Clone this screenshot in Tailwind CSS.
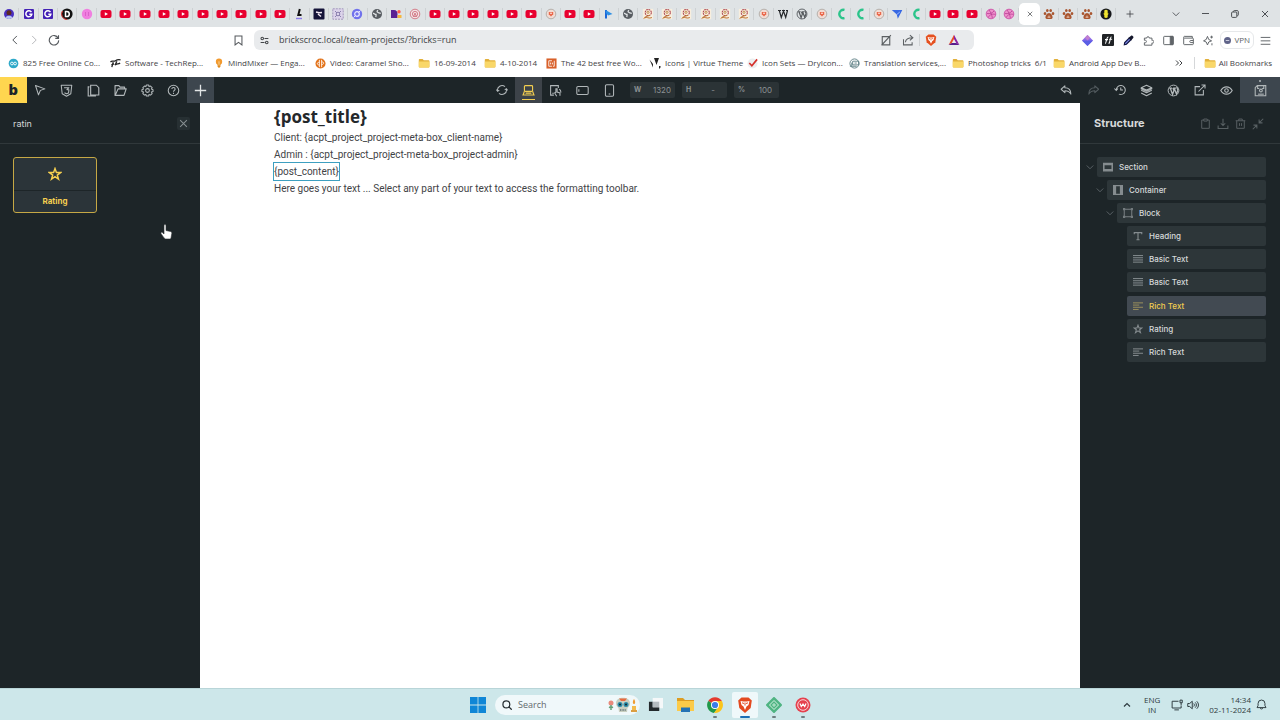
<!DOCTYPE html>
<html lang="en">
<head>
<meta charset="utf-8">
<title>Bricks builder</title>
<script src="https://cdn.jsdelivr.net/npm/@tailwindcss/browser@4"></script>
</head>
<body class="flex h-screen min-w-[1100px] flex-col overflow-hidden bg-white font-['Open_Sans','Noto_Sans',sans-serif] text-[9px] text-[#45484b]">

<svg class="hidden" aria-hidden="true">
  <defs>
    <symbol id="yt" viewBox="0 0 12 12"><rect x="0.5" y="2" width="11" height="8" rx="2" fill="#e8002f"/><path d="M4.8 4.2v3.6L8 6z" fill="#fff"/></symbol>
    <symbol id="person" viewBox="0 0 12 12"><circle cx="6" cy="6" r="5" fill="#4a2fc0"/><circle cx="6" cy="4.8" r="2.5" fill="#5b2a22"/><path d="M2.5 9.5c1-2.5 6-2.5 7 0a5 5 0 0 1-7 0z" fill="#b9c6f2"/></symbol>
    <symbol id="g" viewBox="0 0 12 12"><rect x="1" y="1" width="10" height="10" rx="1" fill="#4321b5"/><path d="M8.4 4.2A3 3 0 1 0 8.8 6.3H6.3" fill="none" stroke="#fff" stroke-width="1.5"/></symbol>
    <symbol id="dred" viewBox="0 0 12 12"><circle cx="6" cy="6" r="5.6" fill="#111"/><path d="M1.5 3A5.6 5.6 0 0 0 6 11.6" fill="none" stroke="#e3342f"/><path d="M4.5 3.4v5.2h1.2a2.6 2.6 0 0 0 0-5.2z" fill="none" stroke="#fff" stroke-width="1.5"/></symbol>
    <symbol id="pink" viewBox="0 0 12 12"><circle cx="6" cy="6" r="5.2" fill="#f07fe0"/><path d="M4.5 4v4M7.5 4v4" stroke="#d964c8"/></symbol>
    <symbol id="lmark" viewBox="0 0 12 12"><path d="M6.800 1 5.300 7h3.200" fill="none" stroke="#111" stroke-width="2"/><path d="M3 10.500h6" stroke="#8a7be8" stroke-width="1.400"/></symbol>
    <symbol id="navy" viewBox="0 0 12 12"><rect x=".5" y=".5" width="11" height="11" rx="1" fill="#141338"/><path d="M3 4l3 .8 3-.3M5 6l3 2.500" stroke="#f3e9f4" stroke-width="1.500" fill="none"/></symbol>
    <symbol id="lav" viewBox="0 0 12 12"><rect x=".8" y=".8" width="10.400" height="10.400" fill="#dcd3ea" stroke="#a397bd" stroke-dasharray="2 1"/><path d="M3 3l2 2M9 3L7 5M3 9l2-2M9 9L7 7" stroke="#8a7fae"/><circle cx="6" cy="6" r="1.800" fill="none" stroke="#8a7fae"/></symbol>
    <symbol id="ring" viewBox="0 0 12 12"><circle cx="6" cy="6" r="5.200" fill="#7172ec"/><circle cx="6" cy="6" r="2.300" fill="none" stroke="#e8e8ff" stroke-width="1.200"/><path d="m7.500 4.500 2-2M4.500 7.500l-2 2" stroke="#e8e8ff"/></symbol>
    <symbol id="globe" viewBox="0 0 12 12"><circle cx="6" cy="6" r="5" fill="#585d62"/><path d="M2 5.500c1.500-.3 1.500 1 3 1 0 1 .2 1.500-.3 2.500M7 2.200C5.500 3.200 6 4 7.200 4.500S9 5.500 9.800 5" stroke="#e3e6e8" stroke-width="1.300" fill="none"/></symbol>
    <symbol id="dots" viewBox="0 0 12 12"><path d="M1 2h3a3.800 3.800 0 0 1 3.500 4v4H1z" fill="#5b2293"/><circle cx="9" cy="3.800" r="1.700" fill="#ff5b4d"/><rect x="7.500" y="7" width="4" height="3" fill="#f6b73c"/></symbol>
    <symbol id="rose" viewBox="0 0 12 12"><circle cx="6" cy="6" r="4.800" fill="#f3e0e2" stroke="#cf7380" stroke-width=".9"/><circle cx="6" cy="6" r="2.600" fill="none" stroke="#cf7380" stroke-width=".9"/><path d="M4.500 9 6 5l1.500 4" stroke="#cf7380" stroke-width=".9" fill="none"/></symbol>
    <symbol id="badge" viewBox="0 0 12 12"><circle cx="6" cy="6" r="4.800" fill="#f2dcd4" stroke="#b5b0ab"/><path d="M3.800 4h4.400v2.300L6 8.500 3.800 6.300z" fill="#e9684b"/><circle cx="6" cy="5.300" r=".8" fill="#fff"/></symbol>
    <symbol id="play" viewBox="0 0 12 12"><path d="M3 10.500V2" fill="none" stroke="#1c68d8" stroke-width="2"/><path d="M2.500 2 9.500 6 5 7.500 3 5z" fill="#2d8fe4"/></symbol>
    <symbol id="swirl" viewBox="0 0 14 14"><rect x="1" y="1" width="12" height="12" fill="#f8eede"/><circle cx="7.300" cy="5.300" r="3.600" fill="none" stroke="#a93c47" stroke-width="1.200" stroke-dasharray="2 .8"/><circle cx="7" cy="5" r="1.300" fill="none" stroke="#b9803c"/><path d="M9.500 8.500C7 9 4 10 3 11.500c3-1.500 5 1 8.500-.3" fill="none" stroke="#bd793c" stroke-width="1.200"/></symbol>
    <symbol id="w" viewBox="0 0 12 12"><path d="M1 2.500h3M5 2.500h3M9 2.500h2M2.300 2.500l2 7L6.500 3l2.200 6.500 1.800-7" fill="none" stroke="#26292c" stroke-width="1.200"/></symbol>
    <symbol id="wp" viewBox="0 0 16 16"><circle cx="8" cy="8" r="6.600" fill="none" stroke="currentColor" stroke-width="1.200"/><path d="M2.700 5h3.500M7.500 5H11M4 5l2.800 8L8.500 8 7.300 5M8.800 5l2.900 7.500L13.200 8c.5-2-1.500-2.500-1-4.500" fill="none" stroke="currentColor" stroke-width="1.600"/></symbol>
    <symbol id="crescent" viewBox="0 0 12 12"><path d="M9.500 1.800A4.300 4.300 0 1 0 9.500 10.200" fill="none" stroke="currentColor" stroke-width="2.400"/></symbol>
    <symbol id="kite" viewBox="0 0 12 12"><path d="M.8 2h10.500L6.800 10.800l-1-4.300z" fill="#3869e3"/><path d="m5.800 6.500 3-2.500" stroke="#b8cdfb" stroke-width=".8"/></symbol>
    <symbol id="drib" viewBox="0 0 12 12"><circle cx="6" cy="6" r="4.800" fill="#ee8fca" stroke="#cf5aab"/><path d="M2 5.500c3 .5 5.500-.5 7-2.500M4 2c2 2.500 3 5 3.300 8M3.300 9.500C4.500 6.500 7.500 5.500 10.300 6.500" fill="none" stroke="#b93f95" stroke-width=".8"/></symbol>
    <symbol id="paw" viewBox="0 0 12 12" fill="#a9552f"><ellipse cx="2" cy="5.500" rx="1.300" ry="1.500"/><ellipse cx="4.300" cy="2.600" rx="1.300" ry="1.500"/><ellipse cx="7.700" cy="2.600" rx="1.300" ry="1.500"/><ellipse cx="10" cy="5.500" rx="1.300" ry="1.500"/><path d="M6 5c2 0 4 3 3.500 5-.3 1-1.500 1-3.500 1s-3.200 0-3.500-1C2 8 4 5 6 5z"/><path d="M4.500 9.200h3M6 7.500v2" stroke="#f2d5c6" stroke-width=".8"/></symbol>
    <symbol id="snap" viewBox="0 0 12 12"><circle cx="6" cy="6" r="5.600" fill="#15171a"/><path d="M4.300 2.500c.8-1 2.600-1 3.400 0v2.800l1 .5-1 1.200v2.200c-.8 1-2.600 1-3.400 0V7l-1-1.200 1-.5z" fill="#efe22e"/></symbol>

    <symbol id="folder" viewBox="0 0 12 12"><path d="M.8 2.800c0-.5.3-.8.8-.8h3l1.200 1.300h4.800c.5 0 .8.300.8.800V9.800c0 .5-.3.8-.8.8H1.600c-.5 0-.8-.3-.8-.8z" fill="#e2b03a"/><path d="M.8 4.600h10.600v5.200c0 .5-.3.800-.8.800H1.600c-.5 0-.8-.3-.8-.8z" fill="#f9d768"/></symbol>

    <symbol id="chev-l" viewBox="0 0 16 16"><path d="M11 1.500 4.500 8l6.500 6.500" fill="none" stroke="currentColor" stroke-width="1.600"/></symbol>
    <symbol id="chev-d" viewBox="0 0 16 16"><path d="m1.500 5 6.500 6.500L14.500 5" fill="none" stroke="currentColor" stroke-width="1.600"/></symbol>
    <symbol id="x" viewBox="0 0 16 16"><path d="m2 2 12 12M14 2 2 14" stroke="currentColor" stroke-width="1.800"/></symbol>
    <symbol id="plus" viewBox="0 0 16 16"><path d="M8 1v14M1 8h14" stroke="currentColor" stroke-width="1.600"/></symbol>
    <symbol id="star" viewBox="0 0 16 16"><path d="m8 1.800 1.600 4.500h4.800l-3.800 2.900 1.400 4.700L8 11.100l-4 2.800 1.400-4.700L1.600 6.300h4.800z" fill="none" stroke="currentColor" stroke-width="1.700"/></symbol>
    <symbol id="richtext" viewBox="0 0 16 16"><path d="M0 3h16M0 6.500h10M0 10h16M0 13.500h9" stroke="currentColor" stroke-width="1.600"/></symbol>
    <symbol id="basictext" viewBox="0 0 16 16"><path d="M0 2.500h16M0 6h16M0 9.500h16M0 13h16" stroke="currentColor" stroke-width="1.600"/></symbol>
  </defs>
</svg>

<!-- Browser tabs -->
<div class="flex h-[27px] shrink-0 items-center bg-[#dfe3e5] text-[#3b3e42]">
  <div id="tabs-a" class="flex flex-[851]"></div>
  <div id="tabs-b" class="flex flex-[168]"></div>
  <button aria-label="Close tab" class="flex h-[22px] w-[21px] items-center justify-center rounded-[5px] bg-white"><svg class="size-[6px]"><use href="#x"/></svg></button>
  <div id="tabs-c" class="flex flex-[76]"></div>
  <div class="flex w-[164px] items-center justify-between pr-[11px] pl-[10px]">
    <button aria-label="New tab"><svg class="size-[8px]"><use href="#plus"/></svg></button>
    <div class="flex items-center gap-[22px]">
      <button aria-label="Search tabs"><svg class="size-[8px]"><use href="#chev-d"/></svg></button>
      <button aria-label="Minimize"><svg class="size-[7px]" viewBox="0 0 8 8"><path d="M0 4h8" stroke="currentColor"/></svg></button>
      <button aria-label="Restore"><svg class="size-[8px]" viewBox="0 0 8 8" fill="none" stroke="currentColor" stroke-width=".9"><rect x=".6" y="2" width="5.200" height="5.400" rx="1"/><path d="M2.400 1.800V1.500c0-.5.400-.9.900-.9h3c.6 0 1 .4 1 1v3.200c0 .6-.4 1-1 1"/></svg></button>
      <button aria-label="Close window"><svg class="size-[8px]"><use href="#x"/></svg></button>
    </div>
  </div>
</div>

<!-- Address bar -->
<div class="flex h-[26px] shrink-0 items-center">
  <div class="flex w-[254px] items-center justify-between px-[10px] text-[#55595d]">
    <div class="flex items-center gap-[9px]">
      <button aria-label="Back"><svg class="size-[10px]"><use href="#chev-l"/></svg></button>
      <button aria-label="Forward" class="rotate-180 text-[#b9bbbd]"><svg class="size-[10px]"><use href="#chev-l"/></svg></button>
      <button aria-label="Reload"><svg class="size-[12px]" viewBox="0 0 16 16" fill="none" stroke="currentColor" stroke-width="1.500"><path d="M13.500 5.300A6.300 6.300 0 1 0 14.300 8.500M14 1.500v4.300H9.700"/></svg></button>
    </div>
    <button aria-label="Bookmark"><svg class="size-[11px]" viewBox="0 0 16 16" fill="none" stroke="currentColor" stroke-width="1.500"><path d="M3 1.500h10v13L8 10.800 3 14.500z"/></svg></button>
  </div>
  <div class="flex h-5 flex-1 items-center rounded-[6px] bg-[#e9ebed] pr-[14px] pl-[6px]">
    <svg class="mr-[10px] size-[9px] shrink-0" viewBox="0 0 14 14" fill="none" stroke="#44474a" stroke-width="1.600"><circle cx="3.500" cy="4" r="2"/><path d="M7 4h6M1 10h6"/><circle cx="10.500" cy="10" r="2"/></svg>
    <input aria-label="Address" value="brickscroc.local/team-projects/?bricks=run" class="min-w-0 flex-1 bg-transparent text-[9px] text-[#3f4346] outline-none">
    <div class="flex items-center text-[#5c6063]">
      <svg class="mr-[10px] size-[12px]" viewBox="0 0 16 16" fill="none" stroke="currentColor" stroke-width="1.500"><path d="M3 3.500h10v11H3zM2 15 14.500 1.500"/></svg>
      <svg class="size-[12px]" viewBox="0 0 16 16" fill="none" stroke="currentColor" stroke-width="1.400"><path d="M2 7v7.500h11.500V11M4.500 11C5 7 8 5 14 5M10.500 1.500 14.500 5l-4 3.500"/></svg>
      <span class="mx-[5px] h-3 w-px bg-[#cfd2d4]"></span>
      <svg class="mr-[11px] size-[12px]" viewBox="0 0 16 16"><path d="m4.500.5-3.500 3 1.200 7.500L8 16l5.800-5L15 3.500l-3.500-3z" fill="#e5501f"/><path d="m3.500 4 2.800.5h3.400l2.800-.5-1 4L9.500 9.500 8 13 6.500 9.500l-2-1.500z" fill="#fff"/><path d="M8 5.500v3M5 5.800l2 .7M11 5.800l-2 .7" stroke="#e5501f"/></svg>
      <svg class="size-[12px]" viewBox="0 0 16 16"><path d="M8 1 .8 14.500 5 12l3-5.500z" fill="#e74d28"/><path d="M8 1l7.200 13.500L11 12 8 6.500z" fill="#8b1fa3"/><path d="M.8 14.500h14.400L11 12H5z" fill="#5a1d8c"/></svg>
    </div>
  </div>
  <div class="ml-[108px] flex items-center justify-end gap-[9px] pr-[9px] text-[#606468]">
    <svg class="size-[11px]" viewBox="0 0 16 16"><path d="M8 0 16 8 8 16 0 8z" fill="#8d69e8"/><path d="M8 8l8 0-8 8-8-8z" fill="#5a5fe4"/><path d="M8 0l4 4-4 4-4-4z" fill="#c07fd0"/></svg>
    <svg class="size-[12px]" viewBox="0 0 16 16"><rect width="16" height="16" rx="1.500" fill="#202326"/><path d="M4 13c2 0 1.500-9 4.500-9M4 7.500h4M12.500 3.500c-2 1-1.500 8-3.500 9.500M9.500 7h4" stroke="#fff" stroke-width="1.400" fill="none"/></svg>
    <svg class="size-[11px]" viewBox="0 0 16 16"><path d="m2 14 .5-3L9 4.500 11.500 7 5 13.500z" fill="#7f8bea" stroke="#111642" stroke-width="1.800"/><path d="m8 4 4 4 1-1.500c2-1.500 3-3 1.500-4.800S11.500 1 9.500 3z" fill="#15182c"/></svg>
    <svg class="size-[11px]" viewBox="0 0 16 16" fill="none" stroke="currentColor" stroke-width="1.400"><path d="M2 4.500h3.300a2 2 0 1 1 4 0H13V8a2 2 0 1 1 0 3.500v3.300H2v-3.600a2 2 0 1 0 0-3.500z"/></svg>
    <svg class="size-[11px]" viewBox="0 0 16 16" fill="none" stroke="currentColor" stroke-width="1.400"><rect x="1" y="2" width="14" height="12" rx="1"/><path d="M10.500 2h4v12h-4z" fill="currentColor"/></svg>
    <svg class="size-[11px]" viewBox="0 0 16 16" fill="none" stroke="currentColor" stroke-width="1.400"><path d="M1 4.500V13c0 .6.400 1 1 1h12c.6 0 1-.4 1-1V5.500c0-.6-.4-1-1-1H2c-2 0-1-2.500 0-2.500h11.500v2.500M15 8h-4c-1.500 0-1.500 3 0 3h4"/></svg>
    <svg class="size-[11px]" viewBox="0 0 16 16" fill="none" stroke="currentColor" stroke-width="1.400"><path d="M6.500 2 8.300 6.500l4.200 2-4.200 1.700-1.800 4.300-1.800-4.300L.8 8.500l3.900-2zM12.500 1v4M10.500 3h4M13 12v3"/></svg>
    <button class="-ml-[3px] flex h-[18px] items-center gap-[3px] rounded-[6px] border border-[#e6e8ea] px-[3px] text-[8px]"><svg class="size-[7px]" viewBox="0 0 8 8"><circle cx="4" cy="4" r="4" fill="#5f6388"/><path d="M2 4h4" stroke="#d9dbea"/></svg>VPN</button>
    <button aria-label="Menu" class="-ml-[3px]"><svg class="size-[11px]" viewBox="0 0 16 16" stroke="currentColor" stroke-width="1.400"><path d="M1 3.500h14M1 8.500h14M1 13.500h14"/></svg></button>
  </div>
</div>

<!-- Bookmarks -->
<nav class="flex h-6 shrink-0 items-start pt-[4px] pl-2 text-[8px] leading-3 whitespace-nowrap text-[#3f4245]">
  <a href="#" class="flex w-[102px] items-center gap-1"><svg class="size-[11px]" viewBox="0 0 12 12"><circle cx="6" cy="6" r="5.300" fill="#2fa9c9"/><circle cx="4.300" cy="6" r="1.500" fill="none" stroke="#fff"/><circle cx="7.700" cy="6" r="1.500" fill="none" stroke="#fff"/></svg>825 Free Online Co...</a>
  <a href="#" class="flex w-[104px] items-center gap-1"><svg class="size-[11px]" viewBox="0 0 12 12" fill="none" stroke="#222" stroke-width="1.400"><path d="M.5 4.500C2 2 4 4.500 6 3s3-1.500 5.500-1M3.500 4.500 2 10M7.500 3.500 5.500 8M1.500 7.500l3-1M6 7.500c2-2 3 0 5-2"/></svg>Software - TechRep...</a>
  <a href="#" class="flex w-[101px] items-center gap-1"><svg class="size-[10px]" viewBox="0 0 12 12"><circle cx="6" cy="4.500" r="3.800" fill="#f29a2e"/><path d="M4.300 7h3.400v3.500L6 12l-1.700-1.500z" fill="#e08a1d"/><path d="M6 4v5" stroke="#fff3d0" stroke-width=".8"/></svg>MindMixer — Enga...</a>
  <a href="#" class="flex w-[103px] items-center gap-1"><svg class="size-[11px]" viewBox="0 0 12 12"><circle cx="6" cy="6" r="5.500" fill="#e2731b"/><path d="M4.800 2v8M7.200 2v8M4.800 5c-3-1-3 3 0 2.500M7.200 4.500c3-1 3 3 0 2.500" stroke="#fff" stroke-width=".9" fill="none"/></svg>Video: Caramel Sho...</a>
  <a href="#" class="flex w-[66px] items-center gap-1"><svg class="size-[12px]"><use href="#folder"/></svg>16-09-2014</a>
  <a href="#" class="flex w-[62px] items-center gap-1"><svg class="size-[12px]"><use href="#folder"/></svg>4-10-2014</a>
  <a href="#" class="flex w-[103px] items-center gap-1"><svg class="size-[11px]" viewBox="0 0 12 12"><rect x=".5" y=".5" width="11" height="11" fill="#d8602a"/><path d="M6.500 3H3v6h3.500M9 3v6H7.500M5 5v2M7 5v2" stroke="#fff" stroke-width=".9" fill="none"/></svg>The 42 best free Wo...</a>
  <a href="#" class="flex w-[98px] items-center gap-1"><svg class="size-[12px]" viewBox="0 0 12 12" fill="#222"><path d="m.5 2.500 3.500 8V7zM5 1h5L7.500 8zM10 9h1.500v1.500L10 12z"/></svg>Icons | Virtue Theme</a>
  <a href="#" class="flex w-[102px] items-center gap-1"><svg class="size-[11px]" viewBox="0 0 12 12"><circle cx="6" cy="6" r="5.500" fill="#eceeef"/><path d="M2.500 5.500 5.300 8.500 11 1.500" fill="none" stroke="#d5302b" stroke-width="1.800"/></svg>Icon Sets — DryIcon...</a>
  <a href="#" class="flex w-[103px] items-center gap-1"><svg class="size-[11px]" viewBox="0 0 12 12" fill="none" stroke="#5d7f84"><circle cx="6" cy="6" r="5"/><path d="M4 3.500h6.500v4H4zM1 9h7.500M3 5v4M6 5.500h2.500"/></svg>Translation services,...</a>
  <a href="#" class="flex w-[101px] items-center gap-1"><svg class="size-[12px]"><use href="#folder"/></svg>Photoshop tricks&nbsp; 6/1</a>
  <a href="#" class="flex items-center gap-1"><svg class="size-[12px]"><use href="#folder"/></svg>Android App Dev B...</a>
  <span class="flex-1"></span>
  <button aria-label="More bookmarks" class="mr-[11px] flex h-3 items-center"><svg class="size-[8px]" viewBox="0 0 8 8" fill="none" stroke="currentColor"><path d="m1 1.500 2.500 2.500L1 6.500M4.500 1.500 7 4 4.500 6.500"/></svg></button>
  <span class="mr-[9px] h-3 w-px bg-[#d5d7d9]"></span>
  <a href="#" class="mr-[8px] flex items-center gap-[3px]"><svg class="size-[12px]"><use href="#folder"/></svg>All Bookmarks</a>
</nav>

<!-- Builder toolbar -->
<header class="flex h-[26px] shrink-0 items-stretch justify-between bg-[#1d2528] text-[#b2b8ba]">
  <div class="grid w-[214px] grid-cols-8">
    <button class="bg-[#ffd64f] pb-px font-['Inter',sans-serif] text-[14px] leading-none font-black text-[#1d2528]">b</button>
    <button aria-label="Select" class="grid place-items-center"><svg class="size-[12px]" viewBox="0 0 16 16" fill="none" stroke="currentColor" stroke-width="1.400" stroke-linejoin="round"><path d="m2 2 12.500 4.500-6 2L6 14.500z"/></svg></button>
    <button aria-label="Styles" class="grid place-items-center"><svg class="size-[13px]" viewBox="0 0 16 16" fill="none" stroke="currentColor" stroke-width="1.300" stroke-linejoin="round"><path d="M1.500 1.500h13L13.300 12 8 15l-5.300-3zM5 4.500h6L8.500 7H11l-.5 4L8 12l-2.500-1.200"/></svg></button>
    <button aria-label="Pages" class="grid place-items-center"><svg class="size-[13px]" viewBox="0 0 16 16" fill="none" stroke="currentColor" stroke-width="1.400"><path d="M4.500 1.500h7L14.500 4.500v9h-10zM3 3.500H1.500v11.300h9.500"/></svg></button>
    <button aria-label="Templates" class="grid place-items-center"><svg class="size-[13px]" viewBox="0 0 16 16" fill="none" stroke="currentColor" stroke-width="1.400" stroke-linejoin="round"><path d="M13 6V3.800H7.500L6 2H1.300v12h11l2.700-8H5l-3.500 8"/></svg></button>
    <button aria-label="Settings" class="grid place-items-center"><svg class="size-[13px]" viewBox="0 0 16 16" fill="none" stroke="currentColor" stroke-width="1.300" stroke-linejoin="round"><path d="M6.600 1.300h2.800l.5 1.900 1.800-.6 2 2-.9 1.700 2 .7v2.300l-2 .6.9 1.800-2 2-1.800-.8-.5 1.900H6.600l-.6-1.900-1.700.8-2-2 .8-1.800-2-.6V7l2-.7-.8-1.700 2-2 1.700.6z"/><circle cx="8" cy="8" r="2.300"/></svg></button>
    <button aria-label="Help" class="grid place-items-center"><svg class="size-[13px]" viewBox="0 0 16 16" fill="none" stroke="currentColor" stroke-width="1.300"><circle cx="8" cy="8" r="6.500"/><path d="M6 6.300c0-2.600 4-2.500 4 0C10 8 8 7.800 8 9.600M8 10.800v1.400"/></svg></button>
    <button aria-label="Add element" class="grid place-items-center bg-[#3d464e] text-[#e2e5e6]"><svg class="size-[13px]"><use href="#plus"/></svg></button>
  </div>

  <div class="flex items-center">
    <div class="grid h-full w-[135px] grid-cols-5">
      <button aria-label="Reload canvas" class="grid place-items-center"><svg class="size-[12px]" viewBox="0 0 16 16" fill="none" stroke="currentColor" stroke-width="1.400"><path d="M2.200 9.500A6 6 0 0 1 12 3.600M13.800 6.500A6 6 0 0 1 4 12.400M.5 7.500l1.700 2.200 2.200-1.500M15.500 8.500l-1.700-2.200-2.200 1.500"/></svg></button>
      <button aria-label="Desktop" class="relative grid place-items-center bg-[#3d4349] text-[#f2cd50]"><svg class="size-[13px]" viewBox="0 0 16 16" fill="none" stroke="currentColor" stroke-width="1.400"><rect x="3" y="2" width="10" height="7" rx="1"/><path d="M3 9 1.300 13.500h13.400L13 9M4.500 11.200h7"/></svg><span class="absolute bottom-[3px] left-[7px] h-px w-[13px] bg-[#f2cd50]"></span></button>
      <button aria-label="Tablet portrait" class="grid place-items-center"><svg class="size-[13px]" viewBox="0 0 16 16" fill="none" stroke="currentColor" stroke-width="1.300"><path d="M6 13.700H2V2h9.500v3M4 11.500h2M9.500 15 7 11l1.500-.8V6h1.500v4l3.500 1v3.500M12.500 6.500c1.500.5 2.200 2 2.200 4"/></svg></button>
      <button aria-label="Mobile landscape" class="grid place-items-center"><svg class="size-[13px]" viewBox="0 0 16 16" fill="none" stroke="currentColor" stroke-width="1.300"><rect x="1" y="3" width="14" height="10" rx="1.500"/><path d="M3.500 6.500v3"/></svg></button>
      <button aria-label="Mobile portrait" class="grid place-items-center"><svg class="size-[13px]" viewBox="0 0 16 16" fill="none" stroke="currentColor" stroke-width="1.300"><rect x="3" y="1" width="10" height="14" rx="1.500"/><path d="M7 12.300h2"/></svg></button>
    </div>
    <div class="ml-[7px] flex gap-[7px] font-['Inter',sans-serif] text-[#8b9193]">
      <label class="flex h-4 w-[45px] items-center rounded-[2px] bg-[#2b3336] pl-1 text-[7px] font-bold">W<input value="1320" class="min-w-0 flex-1 bg-transparent pr-1 text-right text-[8px] font-normal outline-none"></label>
      <label class="flex h-4 w-[45px] items-center rounded-[2px] bg-[#2b3336] pl-1 text-[7px] font-bold">H<input value="-" class="min-w-0 flex-1 bg-transparent pr-3 text-right text-[8px] font-normal outline-none"></label>
      <label class="flex h-4 w-[45px] items-center rounded-[2px] bg-[#2b3336] pl-1 text-[7px] font-bold">%<input value="100" class="min-w-0 flex-1 bg-transparent pr-[7px] text-right text-[8px] font-normal outline-none"></label>
    </div>
  </div>

  <div class="flex">
    <div class="grid w-[187px] grid-cols-7">
      <button aria-label="Undo" class="grid place-items-center"><svg class="size-[12px]" viewBox="0 0 16 16" fill="none" stroke="currentColor" stroke-width="1.400" stroke-linejoin="round"><path d="M6.500 2.500 1.500 7l5 4.500V9c4 0 6 .5 8 4.500 0-6-3-8.500-8-8.500z"/></svg></button>
      <button aria-label="Redo" class="grid -scale-x-100 place-items-center text-[#545c60]"><svg class="size-[12px]" viewBox="0 0 16 16" fill="none" stroke="currentColor" stroke-width="1.400" stroke-linejoin="round"><path d="M6.500 2.500 1.500 7l5 4.500V9c4 0 6 .5 8 4.500 0-6-3-8.500-8-8.500z"/></svg></button>
      <button aria-label="History" class="grid place-items-center"><svg class="size-[12px]" viewBox="0 0 16 16" fill="none" stroke="currentColor" stroke-width="1.400"><path d="M3 8a6 6 0 1 1 3.500 5.500M.5 6 3 8.500 5.300 6M9 4.500V8h3"/></svg></button>
      <button aria-label="Layers" class="grid place-items-center"><svg class="size-[13px]" viewBox="0 0 16 16" fill="none" stroke="currentColor" stroke-width="1.300" stroke-linejoin="round"><path d="m8 1.500 6.500 3L8 7.500l-6.500-3zM1.500 7.800l6.500 3 6.500-3M1.500 11l6.500 3.500 6.500-3.500M1.500 4.500v1.500l6.500 3 6.500-3V4.500"/></svg></button>
      <button aria-label="WordPress" class="grid place-items-center"><svg class="size-[13px]"><use href="#wp"/></svg></button>
      <button aria-label="Open page" class="grid place-items-center"><svg class="size-[12px]" viewBox="0 0 16 16" fill="none" stroke="currentColor" stroke-width="1.400"><path d="M8 3.500H1.500v11h11V8M6 10l8.500-8.500M10 1.300h4.700V6"/></svg></button>
      <button aria-label="Preview" class="grid place-items-center"><svg class="size-[13px]" viewBox="0 0 16 16" fill="none" stroke="currentColor" stroke-width="1.400"><path d="M1 8c3.500-6 10.500-6 14 0-3.500 6-10.500 6-14 0z"/><circle cx="8" cy="8" r="2.200"/></svg></button>
    </div>
    <button aria-label="Save" class="relative grid w-10 place-items-center bg-[#3d464e]"><svg class="size-[13px]" viewBox="0 0 16 16" fill="none" stroke="currentColor" stroke-width="1.300"><path d="M1.500 4.500 4 2h10.500v12.500h-13zM4.500 2v3.500h2M12 2v3.500h-2"/><circle cx="8.500" cy="8" r="1.700"/><path d="M5 12.500h7"/></svg><span class="absolute top-[3px] left-[19px] size-[2px] rounded-full bg-[#b2b8ba]"></span></button>
  </div>
</header>

<div class="flex min-h-0 flex-1">
  <!-- Elements panel -->
  <aside class="relative w-[200px] shrink-0 bg-[#1d2528] font-['Inter',sans-serif]">
    <div class="flex h-[41px] items-center justify-between border-b border-[#30383b] pt-px pr-[10px] pl-[13px]">
      <input aria-label="Search elements" value="ratin" class="w-32 bg-transparent text-[9px] text-[#d5d8d9] outline-none">
      <button aria-label="Clear search" class="grid size-[13px] place-items-center rounded-[2px] bg-[#273033] text-[#899093]"><svg class="size-[9px]"><use href="#x"/></svg></button>
    </div>
    <button class="mt-[13px] ml-[13px] flex h-[56px] w-[84px] flex-col rounded-[3px] border border-[#c6a845] bg-[#2b3439] text-[#f5cf50]">
      <span class="grid w-full flex-1 place-items-center border-b border-[#1d2528]"><svg class="size-[14px]"><use href="#star"/></svg></span>
      <span class="w-full text-center text-[8px] leading-[21px] font-bold">Rating</span>
    </button>
    <svg class="absolute top-[121px] left-[160px] h-[16px] w-[13px]" viewBox="0 0 13 16"><path d="M4 1.500c0-1.200 2-1.200 2 0v5l4.500 1c1 .3 1.500 1 1.300 2L11 14c-.2.800-.6 1-1.200 1H5.500C4.500 15 2 11 1 9.500c-.5-1 .8-1.600 1.600-.8L4 10z" fill="#fff" stroke="#2c3033" stroke-width=".6"/></svg>
  </aside>

  <!-- Canvas -->
  <main class="min-w-0 flex-1 bg-white pt-px pr-[73px] pl-[74px] font-['Roboto','Open_Sans',sans-serif] text-[10px] leading-[17px] text-[#3f4346]">
    <h1 class="font-['Open_Sans',sans-serif] text-[17px] leading-[25px] font-bold text-[#24282b]">{post_title}</h1>
    <p>Client: {acpt_project_project-meta-box_client-name}</p>
    <p>Admin : {acpt_project_project-meta-box_project-admin}</p>
    <p class="w-fit outline outline-[#3d9fc0]">{post_content}</p>
    <p>Here goes your text ... Select any part of your text to access the formatting toolbar.</p>
  </main>

  <!-- Structure panel -->
  <aside class="w-[200px] shrink-0 bg-[#1d2528] font-['Inter',sans-serif] text-[#d6d9da]">
    <div class="flex h-[41px] items-center justify-between border-b border-[#30383b] pt-px pr-[16px] pl-[14px]">
      <h2 class="text-[11px] font-bold">Structure</h2>
      <div class="flex gap-[6px] text-[#596164]">
        <button aria-label="Paste"><svg class="size-[11px]" viewBox="0 0 16 16" fill="none" stroke="currentColor" stroke-width="1.400"><path d="M5.500 3H2.500v12h11V3h-3M5.500 1.500h5v3h-5z"/></svg></button>
        <button aria-label="Import"><svg class="size-[12px]" viewBox="0 0 16 16" fill="none" stroke="currentColor" stroke-width="1.400"><path d="M1.500 10v4h13v-4M8 1v9M5 7l3 3 3-3"/></svg></button>
        <button aria-label="Delete"><svg class="size-[11px]" viewBox="0 0 16 16" fill="none" stroke="currentColor" stroke-width="1.400"><path d="M1 4h14M5.500 4V1.500h5V4M2.500 4v11h11V4M6.500 7.500v4M9.500 7.500v4"/></svg></button>
        <button aria-label="Collapse"><svg class="size-[12px]" viewBox="0 0 16 16" fill="none" stroke="currentColor" stroke-width="1.400"><path d="m15 1-5.500 5.500M9.500 2v4.500H14M1 15l5.500-5.500M6.500 14V9.500H2"/></svg></button>
      </div>
    </div>
    <div class="flex flex-col gap-[3px] pt-[13px] pr-[14px] pl-[3px] text-[8px] font-medium">
      <div class="flex items-center"><button aria-label="Toggle Section" class="grid w-[14px] place-items-center text-[#687073]"><svg class="size-[8px]"><use href="#chev-d"/></svg></button><button class="flex h-5 flex-1 items-center gap-[6px] rounded-[2px] bg-[#2d3639] pl-[6px]"><svg class="size-[10px]" viewBox="0 0 16 16" fill="#858c8f"><path d="M0 1h16v14H0zM2.500 5v6h11V5z" fill-rule="evenodd"/></svg>Section</button></div>
      <div class="flex flex-col gap-[3px] pl-[10px]">
        <div class="flex items-center"><button aria-label="Toggle Container" class="grid w-[14px] place-items-center text-[#687073]"><svg class="size-[8px]"><use href="#chev-d"/></svg></button><button class="flex h-5 flex-1 items-center gap-[6px] rounded-[2px] bg-[#2d3639] pl-[6px]"><svg class="size-[10px]" viewBox="0 0 16 16" fill="#858c8f"><path d="M0 0h16v16H0zM5 2v12h6V2z" fill-rule="evenodd"/></svg>Container</button></div>
        <div class="flex flex-col gap-[3px] pl-[10px]">
          <div class="flex items-center"><button aria-label="Toggle Block" class="grid w-[14px] place-items-center text-[#687073]"><svg class="size-[8px]"><use href="#chev-d"/></svg></button><button class="flex h-5 flex-1 items-center gap-[6px] rounded-[2px] bg-[#2d3639] pl-[6px]"><svg class="size-[10px]" viewBox="0 0 16 16"><path d="M2 2h12v12H2z" fill="none" stroke="#858c8f" stroke-width="1.400"/><path d="M0 0h3.500v3.500H0zM12.500 0H16v3.500h-3.500zM0 12.500h3.500V16H0zM12.500 12.500H16V16h-3.500z" fill="#737b7e"/></svg>Block</button></div>
          <div class="flex flex-col gap-[3px] pl-6">
            <button class="flex h-5 items-center gap-[6px] rounded-[2px] bg-[#2d3639] pl-[6px]"><svg class="size-[10px]" viewBox="0 0 16 16" fill="none" stroke="#858c8f" stroke-width="1.800"><path d="M2 5V2.500h12V5M8 2.500v11M5.500 14h5"/></svg>Heading</button>
            <button class="flex h-5 items-center gap-[6px] rounded-[2px] bg-[#2d3639] pl-[6px]"><svg class="size-[10px] text-[#858c8f]"><use href="#basictext"/></svg>Basic Text</button>
            <button class="mb-px flex h-5 items-center gap-[6px] rounded-[2px] bg-[#2d3639] pl-[6px]"><svg class="size-[10px] text-[#858c8f]"><use href="#basictext"/></svg>Basic Text</button>
            <button class="flex h-5 items-center gap-[6px] rounded-[2px] bg-[#424a52] pl-[6px] text-[#f2cd50]"><svg class="size-[10px] text-[#9a8f5c]"><use href="#richtext"/></svg>Rich Text</button>
            <button class="flex h-5 items-center gap-[6px] rounded-[2px] bg-[#2d3639] pl-[6px]"><svg class="size-[10px] text-[#858c8f]"><use href="#star"/></svg>Rating</button>
            <button class="flex h-5 items-center gap-[6px] rounded-[2px] bg-[#2d3639] pl-[6px]"><svg class="size-[10px] text-[#858c8f]"><use href="#richtext"/></svg>Rich Text</button>
          </div>
        </div>
      </div>
    </div>
  </aside>
</div>

<!-- Windows taskbar -->
<footer class="grid h-8 shrink-0 grid-cols-[1fr_auto_1fr] items-center border-t border-[#b9d5d8] bg-[#cde7ea] text-[#2e3b40]">
  <span></span>
  <div class="flex items-center pl-[6px]">
    <button aria-label="Start" class="mr-[9px]"><svg class="size-4" viewBox="0 0 16 16" fill="#0f86d6"><path d="M0 0h7.600v7.600H0zM8.400 0H16v7.600H8.400zM0 8.400h7.600V16H0zM8.400 8.400H16V16H8.400z"/></svg></button>
    <label class="flex h-5 w-[145px] items-center rounded-full bg-[#f0f8fa] pr-[2px] pl-[7px]">
      <svg class="mr-[6px] size-[10px]" viewBox="0 0 16 16" fill="none" stroke="#252d31" stroke-width="2"><circle cx="7" cy="7" r="5.500"/><path d="m11 11 4.500 4.500"/></svg>
      <input aria-label="Search" placeholder="Search" class="w-0 min-w-0 flex-1 bg-transparent text-[9px] outline-none placeholder:text-[#62696d]">
      <svg class="h-4 w-[31px]" viewBox="0 0 31 16"><circle cx="4" cy="6" r="2.500" fill="#e98a7b"/><path d="M4 8v5M2 10l2 1 2-1" stroke="#65a17a" stroke-width="1.500" fill="none"/><path d="M9 6c0-7 14-7 14 0 0 3-1.500 4-2.500 5l-.5 4h-8l-.5-4C10.500 10 9 9 9 6z" fill="#c9cfc0"/><path d="M12 1.500h8L18 4h-4z" fill="#e96a3f"/><circle cx="13" cy="7.500" r="2.500" fill="#2d8ca8"/><circle cx="19" cy="7.500" r="2.500" fill="#2d8ca8"/><circle cx="13" cy="7.500" r="1" fill="#10272f"/><circle cx="19" cy="7.500" r="1" fill="#10272f"/><path d="M13 13h6" stroke="#65777a" stroke-width="1.500" stroke-dasharray="1 .6"/><path d="M25 9h4v5h-4z" fill="#f3bb4d"/><path d="M27 2c2 3 1 5 0 5s-2-2 0-5z" fill="#ef9c35"/><path d="M24 14h6" stroke="#db9e42" stroke-width="2"/></svg>
    </label>
    <button aria-label="Task view" class="ml-[2px] grid size-[26px] place-items-center"><svg class="size-[15px]" viewBox="0 0 16 16"><path d="M5 1h11v11H5z" fill="#f5f8f9"/><path d="M1 5h4v6h7v4H1z" fill="#242a2d"/><path d="M5 5h7v6H5z" fill="#b5bcc0"/></svg></button>
    <button aria-label="File Explorer" class="ml-1 grid size-[26px] place-items-center"><svg class="h-[15px] w-[17px]" viewBox="0 0 17 15"><path d="M0 1h6l2 2h9v11H0z" fill="#dd9d22"/><path d="M0 4h17v10H0z" fill="#fccb49"/><path d="M4 10.500h9V15H4z" fill="#2473b5"/></svg></button>
    <button aria-label="Chrome" class="relative ml-1 grid size-[26px] place-items-center"><svg class="size-4" viewBox="0 0 16 16"><path d="M8 8 1.200 4A8 8 0 0 1 14.900 4z" fill="#e43b2e"/><path d="M8 8 1.200 4A8 8 0 0 0 7 16l4.500-6z" fill="#21994a"/><path d="M8 16a8 8 0 0 0 6.900-12H8l3.500 6L7 16z" fill="#fbc51b"/><circle cx="8" cy="8" r="4" fill="#fff"/><circle cx="8" cy="8" r="3.100" fill="#3b7de8"/></svg><span class="absolute bottom-0 left-[11px] h-[2px] w-1 rounded-full bg-[#6f7d80]"></span></button>
    <button aria-label="Brave" class="relative ml-1 grid size-[26px] place-items-center rounded-[2px] bg-[#eff8fa]"><svg class="size-4" viewBox="0 0 16 16"><path d="m4.500.5-3.300 3 1.100 7.500L8 16l5.700-5 1.100-7.500-3.300-3z" fill="#e34a20"/><path d="m3.500 4 2.800.5h3.400l2.800-.5-1 4L9.500 9.500 8 13 6.500 9.500l-2-1.500z" fill="#fff"/><path d="M8 5.500v3M5 5.800l2 .7M11 5.800l-2 .7" stroke="#e34a20"/></svg><span class="absolute bottom-0 left-[8px] h-[2px] w-[10px] rounded-full bg-[#1b6fb5]"></span></button>
    <button aria-label="Local" class="relative ml-[3px] grid size-[26px] place-items-center"><svg class="size-4" viewBox="0 0 16 16"><path d="M8 1 15 8 8 15 1 8z" fill="#4fb482" stroke="#4fb482" stroke-width="2" stroke-linejoin="round"/><path d="m8 3.500 4.500 4.500L8 12.500 3.500 8z" fill="none" stroke="#d6f2e2"/><path d="M8 6v4M6 8h4" stroke="#d6f2e2" stroke-width=".8"/></svg><span class="absolute bottom-0 left-[11px] h-[2px] w-1 rounded-full bg-[#6f7d80]"></span></button>
    <button aria-label="Recorder" class="relative ml-[3px] grid size-[26px] place-items-center"><svg class="size-4" viewBox="0 0 16 16"><circle cx="8" cy="8" r="7.500" fill="#e5414e"/><circle cx="8" cy="8" r="5.300" fill="none" stroke="#f9d5d8"/><path d="M5 6.500 6.300 9.500 8 7l1.700 2.500L11 6.500" fill="none" stroke="#fff" stroke-width="1.200"/></svg><span class="absolute bottom-0 left-[11px] h-[2px] w-1 rounded-full bg-[#6f7d80]"></span></button>
  </div>
  <div class="flex items-center justify-end pr-[13px] text-[8px] leading-[10px]">
    <svg class="mr-[13px] size-[8px]" viewBox="0 0 8 8" fill="none" stroke="currentColor" stroke-width="1.200"><path d="m1 5.500 3-3 3 3"/></svg>
    <p class="mr-[11px] text-center">ENG<br>IN</p>
    <svg class="mr-[4px] size-[12px]" viewBox="0 0 16 16" fill="none" stroke="currentColor" stroke-width="1.300"><path d="M10 3H1.500v9h12V8.500M4.500 14.500h6M12 1.500h3v3.500h-3zM13.500 5v3"/></svg>
    <svg class="mr-[10px] size-[12px]" viewBox="0 0 16 16" fill="none" stroke="currentColor" stroke-width="1.300"><path d="M1 6v4h2.500L7 13V3L3.500 6zM9 6c1 1 1 3 0 4M11 4.500c2 2 2 5 0 7M13 3c3 3 3 7 0 10"/></svg>
    <p class="mr-[5px] text-right">14:34<br>02-11-2024</p>
    <svg class="size-[11px]" viewBox="0 0 16 16" fill="none" stroke="currentColor" stroke-width="1.400"><path d="M1.500 12.500h13L13 9.500V6.500a5 5 0 0 0-10 0v3zM6 13c.5 2 3.500 2 4 0"/></svg>
  </div>
</footer>

<script>
  // Favicons of the open tabs, in strip order
  const yt = n => Array(n).fill('yt');
  const strips = {
    'tabs-a': ['person','g','g','dred','pink',...yt(10),'lmark','navy','lav','ring','globe','dots','rose',...yt(6),'badge',...yt(2),'play','globe',...Array(6).fill('swirl'),'badge','w','wp','badge','crescent'],
    'tabs-b': ['crescent','badge','kite','crescent',...yt(3),'drib','drib'],
    'tabs-c': ['paw','paw','paw','snap'],
  };
  for (const [id, icons] of Object.entries(strips)) {
    document.getElementById(id).innerHTML = icons.map(i =>
      `<button aria-label="Tab" class="grid h-3 min-w-0 flex-1 place-items-center border-r border-[#cdd1d3] ${i === 'crescent' ? 'text-[#2bc48a]' : 'text-[#55595d]'}"><svg class="size-[12px]"><use href="#${i}"/></svg></button>`).join('');
  }
</script>
</body>
</html>
